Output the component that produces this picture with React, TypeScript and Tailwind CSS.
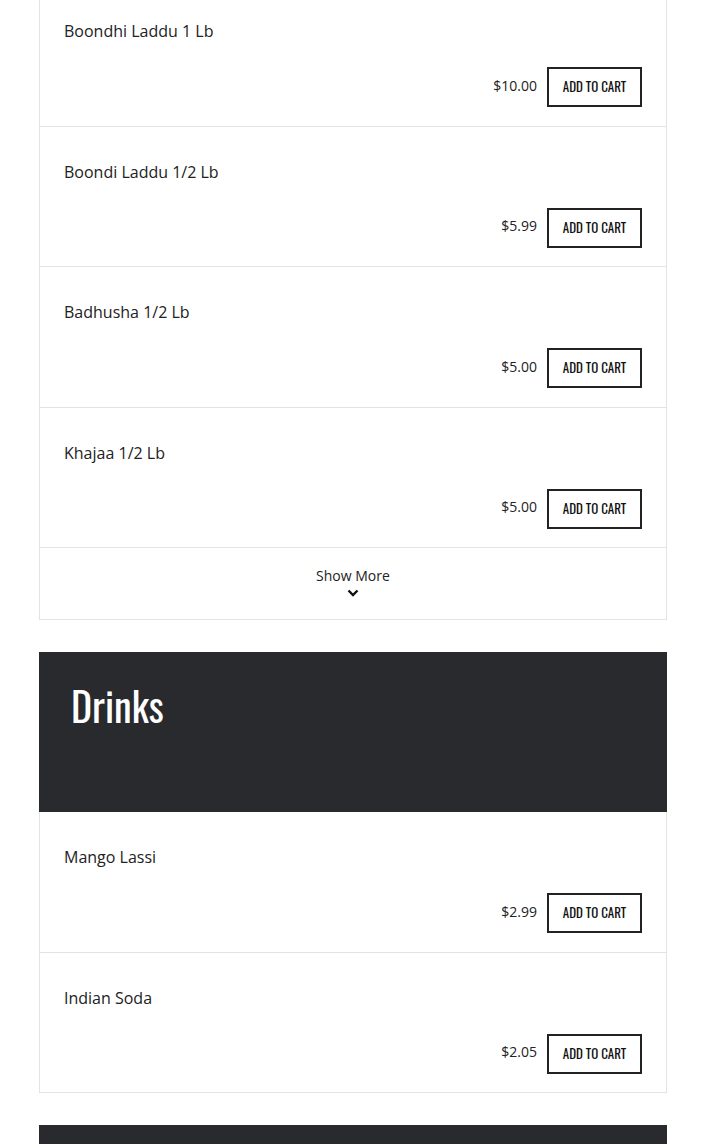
import React from 'react';

const condensed = "font-['Oswald','Liberation_Sans_Narrow','DejaVu_Sans_Condensed',sans-serif]";

type Item = { name: string; price: string };

const sweets: Item[] = [
  { name: 'Boondhi Laddu 1 Lb', price: '$10.00' },
  { name: 'Boondi Laddu 1/2 Lb', price: '$5.99' },
  { name: 'Badhusha 1/2 Lb', price: '$5.00' },
  { name: 'Khajaa 1/2 Lb', price: '$5.00' },
];

const drinks: Item[] = [
  { name: 'Mango Lassi', price: '$2.99' },
  { name: 'Indian Soda', price: '$2.05' },
];

function MenuRow({ item }: { item: Item }) {
  return (
    <div className="h-[140.5px] border-x border-b border-[#e3e3e3] px-6 pt-[33px]">
      <div className="text-[16px] leading-6 text-[#222]">{item.name}</div>
      <div className="mt-[24px] flex items-center justify-end gap-[10px]">
        <span className="-mt-[4px] text-[14px] text-[#222]">{item.price}</span>
        <button className={`h-10 w-[95px] border-2 border-[#222] text-[13px] uppercase text-[#111] ${condensed}`}>
          Add to Cart
        </button>
      </div>
    </div>
  );
}

function CategoryHeader({ title }: { title?: string }) {
  return (
    <div className="h-[160px] bg-[#282a2d] px-8 pt-[24px]">
      {title && <h2 className={`text-[40px] leading-[58px] text-white ${condensed}`}>{title}</h2>}
    </div>
  );
}

export default function App() {
  return (
    <div className="min-h-screen bg-white font-['Open_Sans',sans-serif]">
      <div className="mx-[39px] w-[628px] -mt-[14px]">
        <div>
          {sweets.map((item, idx) => (
            <MenuRow key={idx} item={item} />
          ))}
          <div className="flex h-[72px] flex-col items-center border-x border-b border-[#e3e3e3] pt-[18px] text-[14px] text-[#222]">
            <span className="leading-5">Show More</span>
            <svg width="12" height="8" viewBox="0 0 12 8" className="mt-[3px]">
              <path d="M1.5 1.5 L6 6 L10.5 1.5" fill="none" stroke="#111" strokeWidth="2.4" />
            </svg>
          </div>
        </div>

        <div className="mt-[32px]">
          <CategoryHeader title="Drinks" />
          {drinks.map((item, idx) => (
            <MenuRow key={idx} item={item} />
          ))}
        </div>

        <div className="mt-[32px]">
          <CategoryHeader />
        </div>
      </div>
    </div>
  );
}
